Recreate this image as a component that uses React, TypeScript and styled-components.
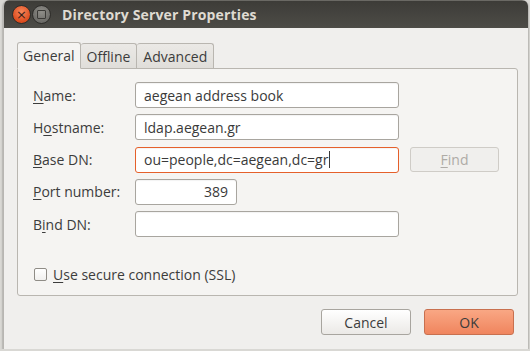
import styled, { createGlobalStyle } from "styled-components";

const GlobalStyle = createGlobalStyle`
  html, body {
    margin: 0;
    padding: 0;
    background: #d9d8d4;
  }
  body {
    font-family: "Open Sans", "Noto Sans", "DejaVu Sans", sans-serif;
    font-size: 14px;
    color: #3c3c3c;
  }
`;

const rows = [
  { label: "Name:", key: "N", rest: "ame:", value: "aegean address book" },
  { label: "Hostname:", pre: "H", key: "o", rest: "stname:", value: "ldap.aegean.gr" },
  { label: "Base DN:", key: "B", rest: "ase DN:", value: "ou=people,dc=aegean,dc=gr", focused: true },
  { label: "Port number:", key: "P", rest: "ort number:", value: "389", short: true },
  { label: "Bind DN:", pre: "B", key: "i", rest: "nd DN:", value: "" },
];

export default function App() {
  return (
    <>
      <GlobalStyle />
      <Window>
        <TitleBar>
          <WinButtons>
            <CloseButton>×</CloseButton>
            <MaxButton>
              <MaxSquare />
            </MaxButton>
          </WinButtons>
          <Title>Directory Server Properties</Title>
        </TitleBar>

        <Body>
          <Tabs>
            <Tab $active>General</Tab>
            <Tab>Offline</Tab>
            <Tab>Advanced</Tab>
          </Tabs>
          <Panel>
            <Form>
              {rows.map((row) => (
                <Row key={row.label}>
                  <Label>
                    {row.pre}
                    <Key>{row.key}</Key>
                    {row.rest}
                  </Label>
                  <Field $focused={row.focused} $short={row.short}>
                    {row.value}
                    {row.focused && <Caret />}
                  </Field>
                  {row.focused && (
                    <FindButton>
                      <Key>F</Key>ind
                    </FindButton>
                  )}
                </Row>
              ))}
            </Form>
            <CheckRow>
              <CheckBox />
              <span>
                <Key>U</Key>se secure connection (SSL)
              </span>
            </CheckRow>
          </Panel>

          <Actions>
            <Button>Cancel</Button>
            <Button $primary>OK</Button>
          </Actions>
        </Body>
      </Window>
    </>
  );
}

const Window = styled.div`
  margin-left: 3px;
  width: 525px;
  height: 349px;
  background: #f0efed;
  border-left: 1px solid #b8b6b2;
  border-radius: 6px 6px 0 0;
  box-sizing: border-box;
  display: flex;
  flex-direction: column;
  overflow: hidden;
  box-shadow: 0 1px 2px rgba(0, 0, 0, 0.5);
`;

const TitleBar = styled.div`
  height: 28px;
  flex-shrink: 0;
  display: flex;
  align-items: center;
  padding-left: 8px;
  gap: 11px;
  background: linear-gradient(#3d3c38, #4d4c47);
  border-top: 1px solid #6a6964;
  box-sizing: border-box;
`;

const WinButtons = styled.div`
  display: flex;
  gap: 1px;
`;

const CloseButton = styled.div`
  width: 17px;
  height: 17px;
  border-radius: 50%;
  background: radial-gradient(circle at 50% 35%, #f7885c, #dd4c1e 70%);
  border: 1px solid #2e2d2a;
  display: flex;
  align-items: center;
  justify-content: center;
  font-family: "DejaVu Sans", sans-serif;
  font-size: 13px;
  line-height: 1;
  color: #3a2218;
`;

const MaxButton = styled.div`
  width: 17px;
  height: 17px;
  border-radius: 50%;
  background: radial-gradient(circle at 50% 35%, #8f8e89, #6d6c68 70%);
  border: 1px solid #2e2d2a;
  display: flex;
  align-items: center;
  justify-content: center;
`;

const MaxSquare = styled.div`
  width: 7px;
  height: 7px;
  border: 1px solid #3b3a37;
  border-radius: 1px;
`;

const Title = styled.div`
  font-family: "Open Sans", "DejaVu Sans", sans-serif;
  font-weight: 700;
  font-size: 14px;
  color: #dfdbd2;
  letter-spacing: 0.15px;
`;

const Body = styled.div`
  flex: 1;
  display: flex;
  flex-direction: column;
  padding: 14px 10px 0 13px;
`;

const Tabs = styled.div`
  display: flex;
  align-items: flex-end;
  height: 26px;
  position: relative;
  z-index: 1;
`;

const Tab = styled.div<{ $active?: boolean }>`
  height: ${({ $active }) => ($active ? "27px" : "25px")};
  box-sizing: border-box;
  padding: 0 ${({ $active }) => ($active ? "5px" : "6px")};
  display: flex;
  align-items: center;
  border: 1px solid #b9b6b0;
  border-bottom: ${({ $active }) => ($active ? "1px solid #f5f4f2" : "none")};
  border-left: ${({ $active }) => ($active ? "1px solid #b9b6b0" : "none")};
  border-radius: 3px 3px 0 0;
  background: ${({ $active }) => ($active ? "#f5f4f2" : "linear-gradient(#ebe9e6, #e0deda)")};
  margin-bottom: ${({ $active }) => ($active ? "-1px" : "0")};
  color: #3c3c3c;

  &:first-child {
    border-left: 1px solid #b9b6b0;
  }
`;

const Panel = styled.div`
  height: 228px;
  box-sizing: border-box;
  border: 1px solid #b9b6b0;
  border-radius: 0 3px 3px 3px;
  background: #f5f4f2;
  padding: 13px 0 0 15px;
  display: flex;
  flex-direction: column;
`;

const Form = styled.div`
  display: flex;
  flex-direction: column;
  gap: 6.25px;
`;

const Row = styled.div`
  display: flex;
  align-items: center;
  height: 26px;
`;

const Label = styled.div`
  width: 102px;
  flex-shrink: 0;
`;

const Key = styled.span`
  text-decoration: underline;
  text-underline-offset: 2px;
`;

const Field = styled.div<{ $focused?: boolean; $short?: boolean }>`
  width: ${({ $short }) => ($short ? "102px" : "264px")};
  height: 26px;
  box-sizing: border-box;
  background: #ffffff;
  border: 1px solid ${({ $focused }) => ($focused ? "#e5602b" : "#a8a59f")};
  border-radius: 3px;
  display: flex;
  align-items: center;
  justify-content: ${({ $short }) => ($short ? "flex-end" : "flex-start")};
  padding: 0 8px;
  color: #3a3a3a;
  box-shadow: inset 0 1px 1px rgba(0, 0, 0, 0.05);
`;

const Caret = styled.span`
  width: 1px;
  height: 17px;
  background: #3a3a3a;
  margin-left: 1px;
`;

const FindButton = styled.div`
  margin-left: 11px;
  width: 89px;
  height: 25px;
  box-sizing: border-box;
  border: 1px solid #cfccc7;
  border-radius: 3px;
  background: #f0efed;
  display: flex;
  align-items: center;
  justify-content: center;
  color: #aeaba6;
`;

const CheckRow = styled.div`
  margin-top: 28px;
  display: flex;
  align-items: center;
  gap: 6px;
`;

const CheckBox = styled.div`
  width: 11px;
  height: 11px;
  margin-left: 1px;
  border: 1px solid #8f8c86;
  border-radius: 2px;
  background: linear-gradient(#ffffff, #f1f0ee);
`;

const Actions = styled.div`
  display: flex;
  justify-content: flex-end;
  gap: 13px;
  padding: 13px 4px 0 0;
`;

const Button = styled.div<{ $primary?: boolean }>`
  width: 90px;
  height: 26px;
  box-sizing: border-box;
  border: 1px solid ${({ $primary }) => ($primary ? "#c8704f" : "#a8a59f")};
  border-radius: 3px;
  background: ${({ $primary }) =>
    $primary ? "linear-gradient(#f9a784, #f0855e)" : "linear-gradient(#ffffff, #ebe9e6)"};
  display: flex;
  align-items: center;
  justify-content: center;
  color: #3c3c3c;
`;
